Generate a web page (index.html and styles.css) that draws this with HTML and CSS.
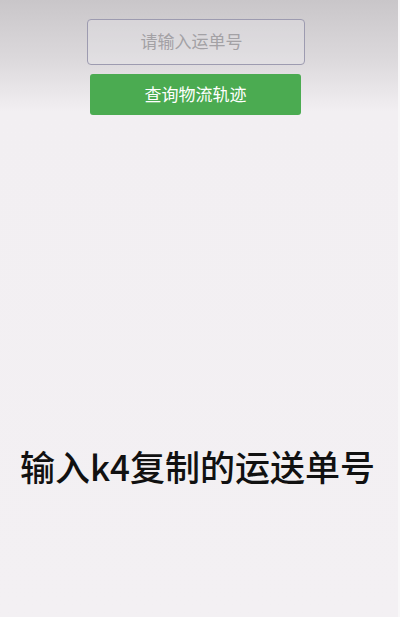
FILE: index.html
```html
<!DOCTYPE html>
<html lang="zh">
<head>
<meta charset="utf-8">
<link rel="stylesheet" href="styles.css">
</head>
<body>
<main class="page">
  <div class="form">
    <div class="input">请输入运单号</div>
    <div class="button">查询物流轨迹</div>
  </div>
  <h1 class="caption">输入k4复制的运送单号</h1>
</main>
</body>
</html>
```
FILE: styles.css
```css
html, body {
  margin: 0;
  padding: 0;
  height: 100%;
}
body {
  background: linear-gradient(to bottom, #c9c6c9 0px, #dcd9dc 60px, #f2eff2 112px, #f3f0f3 617px);
  font-family: "Noto Sans CJK SC", "Noto Sans", sans-serif;
  overflow: hidden;
}
.page {
  height: 617px;
  box-sizing: border-box;
  border-right: 2px solid #f8f7f8;
  display: flex;
  flex-direction: column;
  align-items: center;
  padding-top: 19px;
}
.form {
  display: flex;
  flex-direction: column;
  align-items: center;
  gap: 9px;
  margin-right: 7px;
}
.input {
  width: 218px;
  height: 46px;
  box-sizing: border-box;
  border: 1px solid #9d9bb0;
  border-radius: 4px;
  background: rgba(240, 238, 242, 0.25);
  color: #a3a1a5;
  font-size: 17px;
  padding: 0 8px 3px 0;
  display: flex;
  align-items: center;
  justify-content: center;
}
.button {
  width: 211px;
  height: 41px;
  box-sizing: border-box;
  border-radius: 3px;
  background: #4bab51;
  color: #ffffff;
  font-size: 17px;
  padding-bottom: 3px;
  display: flex;
  align-items: center;
  justify-content: center;
}
.caption {
  margin: 331px 0 0 -3px;
  font-size: 35px;
  line-height: 40px;
  font-weight: 500;
  color: #111111;
  letter-spacing: 0;
}
```
